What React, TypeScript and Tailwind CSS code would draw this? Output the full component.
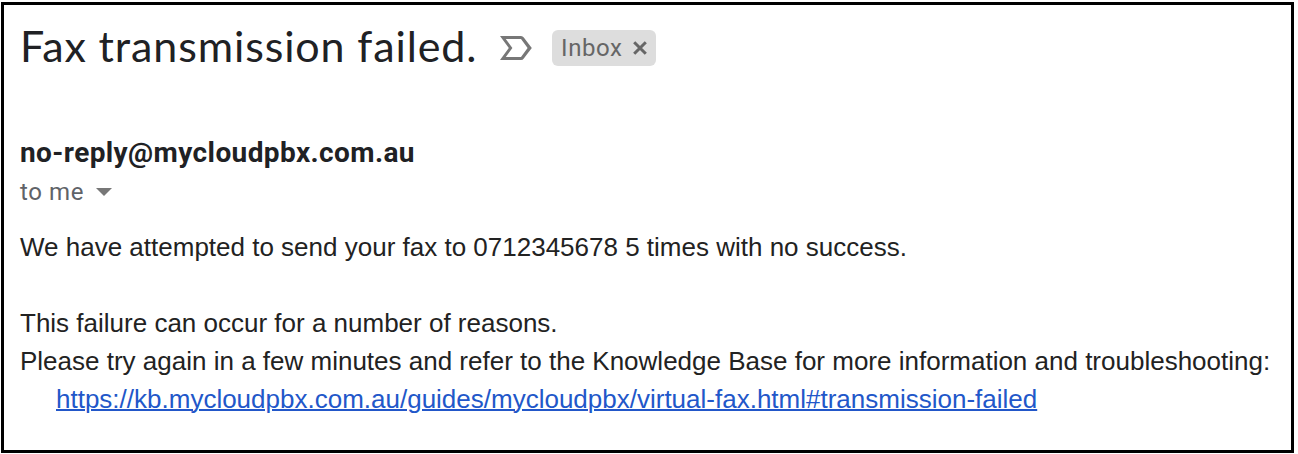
export default function App() {
  return (
    <div className="h-[454px] w-[1298px] bg-white pt-[2px] pl-[1px]">
      <main className="h-[451px] w-[1293px] overflow-hidden border-[3px] border-black pl-4 text-[#202124]">
        <header className="flex h-[86px] items-center whitespace-nowrap">
          <h1 className="w-[480px] pb-[5px] font-['Lato','Open_Sans',sans-serif] text-[43px] leading-[52px] tracking-[0.88px]">Fax transmission failed.</h1>
          <svg className="h-6 w-8" viewBox="0 0 32 24" fill="#777" fillRule="evenodd">
            <path d="M0 0h21q1.8 0 2.8 1.5L31.8 12l-8 10.5Q22.8 24 21 24H0l8.8-12zM5.8 3l6.6 9-6.6 9H21l6.6-9L21 3z" />
          </svg>
          <span className="ml-5 flex h-9 w-[104px] items-center gap-[10px] rounded-md bg-[#ddd] pl-[9px] font-['Roboto',sans-serif] text-2xl tracking-[0.6px] text-[#666]">
            Inbox
            <svg className="h-[14px] w-[14px]" viewBox="0 0 14 14" stroke="#666" strokeWidth="3"><path d="m1.2 1.2 11.6 11.6M12.8 1.2 1.2 12.8" /></svg>
          </span>
        </header>
        <section className="pt-[42px] font-['Roboto',sans-serif]">
          <h2 className="text-[28px] leading-10 font-bold tracking-[0.4px]">no-reply@mycloudpbx.com.au</h2>
          <p className="flex h-[38px] items-center gap-3 text-2xl tracking-[0.6px] text-[#5f6368]">
            to me
            <svg className="h-2 w-4" viewBox="0 0 16 8" fill="#777"><path d="M0 0h16L8 8z" /></svg>
          </p>
        </section>
        <section className="pt-[17px] font-['Liberation_Sans',sans-serif] text-[26px] leading-[38px] whitespace-nowrap text-[#222]">
          <p>We have attempted to send your fax to 0712345678 5 times with no success.</p>
          <p className="pt-[38px]">This failure can occur for a number of reasons.</p>
          <p>Please try again in a few minutes and refer to the Knowledge Base for more information and troubleshooting:</p>
          <a className="ml-9 text-[#2257c9] underline decoration-2" href="#transmission-failed">https://kb.mycloudpbx.com.au/guides/mycloudpbx/virtual-fax.html#transmission-failed</a>
        </section>
      </main>
    </div>
  );
}
